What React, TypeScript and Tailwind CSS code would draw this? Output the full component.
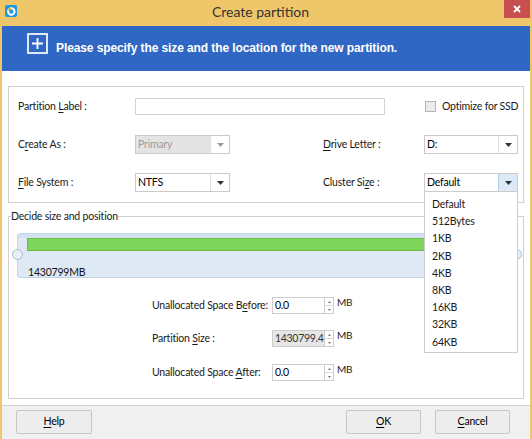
import React from 'react';

const U: React.FC<{ children: React.ReactNode }> = ({ children }) => (
  <span className="underline underline-offset-[2px] decoration-[1px]">{children}</span>
);

const Arrow: React.FC<{ color?: string }> = ({ color = '#333' }) => (
  <svg width="7" height="4" viewBox="0 0 7 4">
    <path d="M0 0h7L3.5 4z" fill={color} />
  </svg>
);

interface SelectProps {
  value: string;
  disabled?: boolean;
  open?: boolean;
  className: string;
}

const clusterSizes = ['Default', '512Bytes', '1KB', '2KB', '4KB', '8KB', '16KB', '32KB', '64KB'];

const Select: React.FC<SelectProps> = ({ value, disabled, open, className }) => (
  <div className={`relative flex h-[19px] border border-[#cbcbcb] bg-white ${className}`}>
    <div className={`flex flex-1 items-center pl-[2px] ${disabled ? 'bg-[#e4e4e4] text-[#9c9c9c]' : 'text-black'}`}>{value}</div>
    <div className={`flex w-[19px] items-center justify-center border-l ${open ? 'border-[#b3cde9] bg-[#dce9f6]' : 'border-[#dedede] bg-white'}`}>
      <Arrow color={disabled ? '#9a9a9a' : '#333'} />
    </div>
    {open && (
      <div className="absolute left-[-1px] top-full z-10 w-[calc(100%+2px)] border border-[#cdcdcd] bg-white pb-[1px] pt-[4px]">
        {clusterSizes.map(s => (
          <div key={s} className="h-[17.2px] pl-[7px] leading-[17.2px] text-[#1a1a1a]">{s}</div>
        ))}
      </div>
    )}
  </div>
);

const Spin: React.FC<{ value: string; grey?: boolean }> = ({ value, grey }) => (
  <div className="flex items-start">
    <div className={`flex h-[17px] w-[53px] items-center overflow-hidden border border-[#cdcdcd] pl-[2px] tracking-[-0.3px] ${grey ? 'bg-[#e6e6e6] text-[#333]' : 'bg-white text-black'}`}>{value}</div>
    <div className="flex h-[17px] w-[9px] flex-col border border-l-0 border-[#cdcdcd] bg-white">
      <div className="flex flex-1 items-center justify-center border-b border-[#dcdcdc]">
        <svg width="3" height="2" viewBox="0 0 3 2"><path d="M1.5 0L3 2H0z" fill="#777" /></svg>
      </div>
      <div className="flex flex-1 items-center justify-center">
        <svg width="3" height="2" viewBox="0 0 3 2"><path d="M0 0h3L1.5 2z" fill="#777" /></svg>
      </div>
    </div>
    <span className="ml-[3px] mt-[-2px] text-[10px] leading-[14px] text-[#222]">MB</span>
  </div>
);

const Button: React.FC<{ children: React.ReactNode; className: string }> = ({ children, className }) => (
  <button className={`flex h-[24px] items-center justify-center rounded-[2px] border border-[#c6c6c6] bg-[#ededed] text-[10.5px] text-black ${className}`}>
    {children}
  </button>
);

export default function App() {
  return (
    <div className="flex h-[439px] w-[532px] flex-col overflow-hidden whitespace-nowrap bg-[#f0c66b] font-['Lato',sans-serif] text-[10.5px] tracking-[-0.2px] text-[#1a1a1a]">
      {/* title bar */}
      <div className="flex h-[26px] shrink-0 items-start tracking-normal">
        <svg className="ml-[5px] mt-[5px]" width="12" height="12" viewBox="0 0 12 12">
          <rect width="12" height="12" rx="2" fill="#1f9ae0" />
          <circle cx="6.3" cy="6.5" r="3.2" fill="none" stroke="#fff" strokeWidth="2" />
          <path d="M2.6 5.2A3.8 3.8 0 0 1 5.4 2.5L6 4.5A2 2 0 0 0 4.4 5.8z" fill="#f39a1e" />
        </svg>
        <div className="flex-1 pt-[3px] text-center text-[14px] leading-[18px] text-[#333]">Create partition</div>
        <div className="mr-[2px] flex h-[18px] w-[26px] items-center justify-center bg-[#c84f4f]">
          <svg width="8" height="8" viewBox="0 0 8 8">
            <path d="M1 1l6 6M7 1L1 7" stroke="#fff" strokeWidth="1.8" />
          </svg>
        </div>
      </div>

      <div className="mx-[2px] flex flex-1 flex-col bg-white">
        {/* header */}
        <div className="flex h-[45px] shrink-0 items-start bg-[#3167c4] pl-[25px]">
          <svg className="mt-[7px]" width="21" height="21" viewBox="0 0 21 21">
            <rect x="1" y="1" width="19" height="19" fill="none" stroke="#fff" strokeWidth="1.7" />
            <path d="M10.5 5v11M5 10.5h11" stroke="#fff" strokeWidth="1.8" />
          </svg>
          <div className="ml-[8px] mt-[15px] font-['Liberation_Sans',sans-serif] text-[12px] font-bold leading-[14px] tracking-[-0.1px] text-white">
            Please specify the size and the location for the new partition.
          </div>
        </div>

        {/* content */}
        <div className="flex flex-1 flex-col px-[6px]">
          <div className="mt-[15px] h-[117px] shrink-0 border border-[#d0d0d0] pl-[9px] pt-[11px]">
            <div className="flex h-[17px] items-center">
              <div className="w-[117px]">Partition <U>L</U>abel :</div>
              <div className="h-[17px] w-[250px] border border-[#d3d3d3] bg-white" />
              <div className="ml-[40px] h-[11px] w-[11px] border border-[#b5b5b5] bg-[#ececec]" />
              <div className="ml-[6px]">Optimize for SSD</div>
            </div>
            <div className="mt-[20px] flex h-[19px] items-center">
              <div className="w-[117px]">C<U>r</U>eate As :</div>
              <Select value="Primary" disabled className="w-[95px]" />
              <div className="ml-[93px] w-[101px]"><U>D</U>rive Letter :</div>
              <Select value="D:" className="w-[94px]" />
            </div>
            <div className="mt-[19px] flex h-[19px] items-center">
              <div className="w-[117px]"><U>F</U>ile System :</div>
              <Select value="NTFS" className="w-[95px]" />
              <div className="ml-[93px] w-[101px]">Cluster Si<U>z</U>e :</div>
              <Select value="Default" open className="w-[94px]" />
            </div>
          </div>

          <fieldset className="mb-[6px] mt-[7px] min-w-0 flex-1 border border-[#d0d0d0]">
            <legend className="ml-[2px] leading-[13px] text-[#1a1a1a]">Decide size and position</legend>
            <div className="relative ml-[8px] mt-[10px] h-[45px] w-[500px] rounded-[3px] border border-[#c4d3e3] bg-[#dfe9f5]">
              <div className="h-[4px] bg-[#d3e1f0]" />
              <div className="ml-[9px] h-[13px] w-[480px] border border-[#69bd47] bg-[#7fd45b]" />
              <div className="ml-[10px] mt-[15px] leading-[13px] text-[#111]">1430799MB</div>
              <div className="absolute left-[-6px] top-[15px] h-[11px] w-[11px] rounded-full border border-[#a9bdd3] bg-[#e7eff8]" />
              <div className="absolute right-[-6px] top-[15px] h-[11px] w-[11px] rounded-full border border-[#a9bdd3] bg-[#e7eff8]" />
            </div>

            <div className="mt-[19px] flex flex-col gap-[16px] pl-[143px]">
              <div className="flex items-center">
                <div className="w-[120px]">Unallocated Space B<U>e</U>fore:</div>
                <Spin value="0.0" />
              </div>
              <div className="flex items-center">
                <div className="w-[120px]">Partition <U>S</U>ize :</div>
                <Spin value="1430799.4" grey />
              </div>
              <div className="mt-[1px] flex items-center">
                <div className="w-[120px]">Unallocated Space <U>A</U>fter:</div>
                <Spin value="0.0" />
              </div>
            </div>
          </fieldset>
        </div>

        {/* footer */}
        <div className="flex h-[34px] shrink-0 items-start border-t border-[#d4d4d4] bg-[#f0f0f0] pl-[14px] pr-[20px] pt-[4px]">
          <Button className="w-[76px]"><U>H</U>elp</Button>
          <div className="flex-1" />
          <Button className="w-[75px]"><U>O</U>K</Button>
          <Button className="ml-[14px] w-[75px]"><U>C</U>ancel</Button>
        </div>
      </div>
    </div>
  );
}
